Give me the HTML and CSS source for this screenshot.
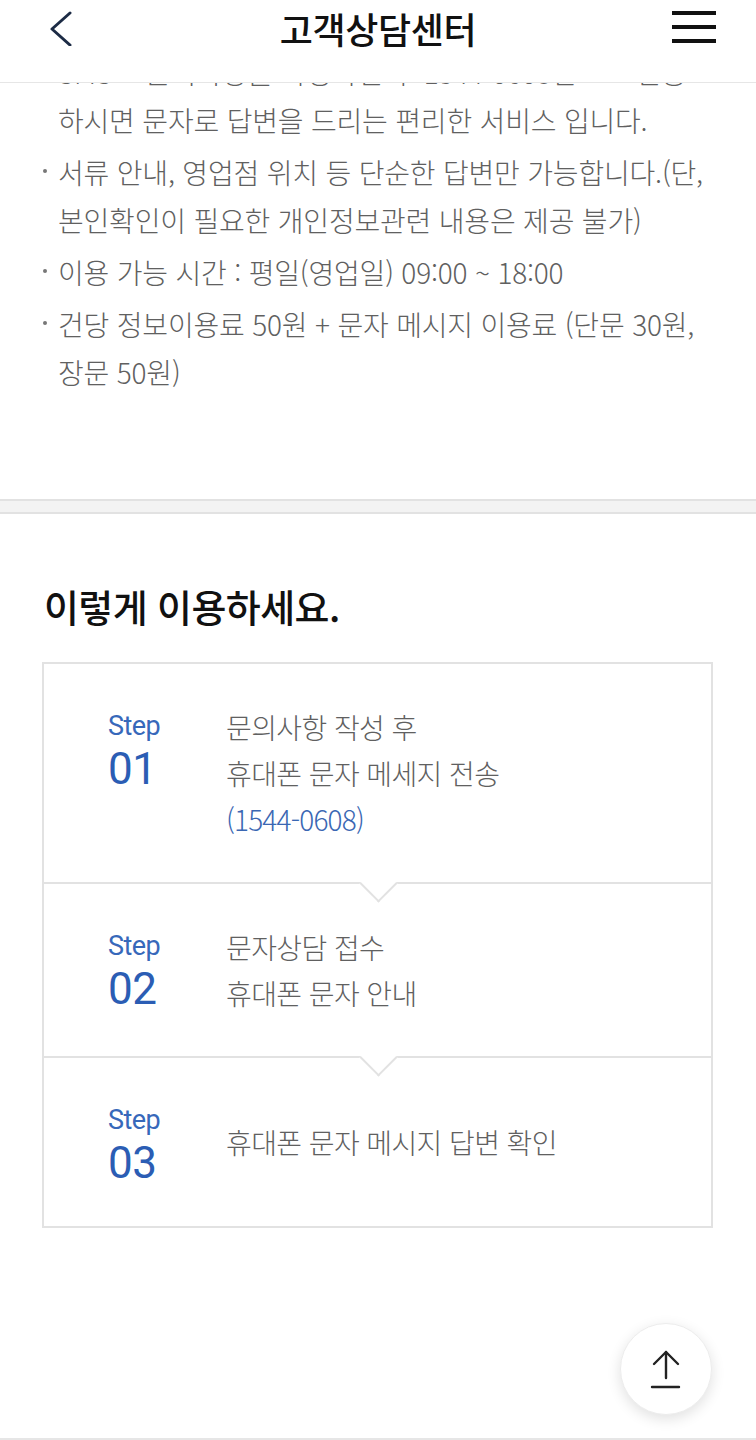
FILE: index.html
```html
<!DOCTYPE html>
<html lang="ko">
<head>
<meta charset="utf-8">
<title>고객상담센터</title>
<link rel="stylesheet" href="styles.css">
</head>
<body>
<header class="topbar">
  <button class="icon-btn back" aria-label="뒤로">
    <svg width="28" height="40" viewBox="0 0 28 40"><polyline points="22,7 4,23 22,39" fill="none" stroke="#1c2b45" stroke-width="3" stroke-linecap="round" stroke-linejoin="round"/></svg>
  </button>
  <h1 class="title">고객상담센터</h1>
  <button class="icon-btn menu" aria-label="메뉴">
    <span class="bar"></span><span class="bar"></span><span class="bar"></span>
  </button>
</header>

<main class="page">
  <ul class="notice">
    <li>SMS로 문의사항을 작성하신 후 1544-0608번으로 전송<br>하시면 문자로 답변을 드리는 편리한 서비스 입니다.</li>
    <li>서류 안내, 영업점 위치 등 단순한 답변만 가능합니다.(단,<br>본인확인이 필요한 개인정보관련 내용은 제공 불가)</li>
    <li>이용 가능 시간 : 평일(영업일) 09:00 ~ 18:00</li>
    <li>건당 정보이용료 50원 + 문자 메시지 이용료 (단문 30원,<br>장문 50원)</li>
  </ul>

  <div class="band"></div>

  <section class="howto">
    <h2 class="howto-title">이렇게 이용하세요.</h2>
    <div class="steps">
      <div class="step">
        <div class="step-no"><span class="step-label">Step</span><span class="step-num">01</span></div>
        <div class="step-text">문의사항 작성 후<br>휴대폰 문자 메세지 전송<br><span class="tel">(1544-0608)</span></div>
      </div>
      <div class="step step-next">
        <div class="step-no"><span class="step-label">Step</span><span class="step-num">02</span></div>
        <div class="step-text">문자상담 접수<br>휴대폰 문자 안내</div>
      </div>
      <div class="step step-next step-single">
        <div class="step-no"><span class="step-label">Step</span><span class="step-num">03</span></div>
        <div class="step-text">휴대폰 문자 메시지 답변 확인</div>
      </div>
    </div>
  </section>

  <footer class="foot"></footer>
</main>

<button class="to-top" aria-label="맨 위로">
  <svg width="40" height="44" viewBox="0 0 40 44"><g fill="none" stroke="#222" stroke-width="2.4" stroke-linecap="round" stroke-linejoin="round"><polyline points="8,16 20,4 32,16"/><line x1="20" y1="4" x2="20" y2="30"/><line x1="6" y1="39" x2="33" y2="39"/></g></svg>
</button>
</body>
</html>
```
FILE: styles.css
```css
* { box-sizing: border-box; }
html, body { margin: 0; padding: 0; background: #fff; }
body {
  font-family: "Noto Sans CJK KR", "Noto Sans", sans-serif;
  color: #5a5a5a;
}

.topbar {
  position: fixed;
  top: 0; left: 0; right: 0;
  height: 83px;
  background: #fff;
  border-bottom: 1px solid #e6e6e6;
  display: flex;
  align-items: flex-start;
  padding: 0 40px 0 48px;
  z-index: 10;
}
.icon-btn {
  background: none;
  border: 0;
  padding: 0;
  cursor: pointer;
  flex: none;
}
.back { margin-top: 4px; width: 28px; height: 46px; }
.title {
  flex: 1;
  text-align: center;
  margin: 3px 0 0 0;
  padding-left: 8px;
  font-size: 36px;
  line-height: 50px;
  font-weight: 500;
  color: #111;
  letter-spacing: -0.4px;
}
.menu {
  width: 44px;
  margin-top: 11px;
  display: flex;
  flex-direction: column;
  gap: 10px;
}
.bar { display: block; height: 4px; background: #111; width: 44px; }

.page { padding-top: 48px; }

.notice {
  list-style: none;
  margin: 0;
  padding: 0 20px 0 58px;
  font-size: 28px;
  line-height: 48px;
  letter-spacing: -0.2px;
  font-weight: 300;
  color: #606060;
}
.notice li { position: relative; margin-bottom: 4px; white-space: nowrap; }
.notice li::before {
  content: "";
  position: absolute;
  left: -15px;
  top: 21px;
  width: 4px;
  height: 4px;
  border-radius: 50%;
  background: #777;
}

.band {
  margin-top: 103px;
  height: 15px;
  background: #f3f3f3;
  border-top: 2px solid #e2e2e2;
  border-bottom: 2px solid #e2e2e2;
}

.howto { padding: 70px 43px 0 42px; }
.howto-title {
  margin: 0 0 34px 2px;
  font-size: 38px;
  line-height: 44px;
  font-weight: 500;
  color: #111;
  letter-spacing: -0.6px;
}

.steps { border: 2px solid #e2e2e2; }
.step {
  position: relative;
  display: flex;
  align-items: flex-start;
  padding: 40px 0 40px 64px;
}
.step-next { border-top: 2px solid #e2e2e2; }
.step-next::before {
  content: "";
  position: absolute;
  left: 50%;
  top: -14px;
  width: 25px;
  height: 25px;
  margin-left: -13px;
  background: #fff;
  border-right: 2px solid #e2e2e2;
  border-bottom: 2px solid #e2e2e2;
  transform: rotate(45deg);
}
.step-single { align-items: center; }

.step-no {
  width: 118px;
  flex: none;
  display: flex;
  flex-direction: column;
  padding-top: 2px;
  font-family: Roboto, "Noto Sans", sans-serif;
  color: #3768ba;
}
.step-label { font-size: 27px; line-height: 40px; letter-spacing: -0.6px; }
.step-num { font-size: 44px; line-height: 46px; font-weight: 400; color: #2b5db4; letter-spacing: -0.5px; }

.step-text {
  font-size: 28px;
  line-height: 46px;
  letter-spacing: -0.6px;
  font-weight: 300;
  color: #606060;
}
.tel { color: #3a67b3; letter-spacing: -0.8px; }

.foot {
  margin-top: 210px;
  border-top: 2px solid #e6e6e6;
  height: 40px;
}

.to-top {
  position: fixed;
  left: 620px;
  top: 1323px;
  width: 92px;
  height: 92px;
  border-radius: 50%;
  background: #fff;
  border: 1px solid #ececec;
  box-shadow: 0 4px 14px rgba(0, 0, 0, 0.12);
  display: flex;
  align-items: center;
  justify-content: center;
  padding: 0;
  cursor: pointer;
}
.to-top svg { margin-top: 2px; }
```
